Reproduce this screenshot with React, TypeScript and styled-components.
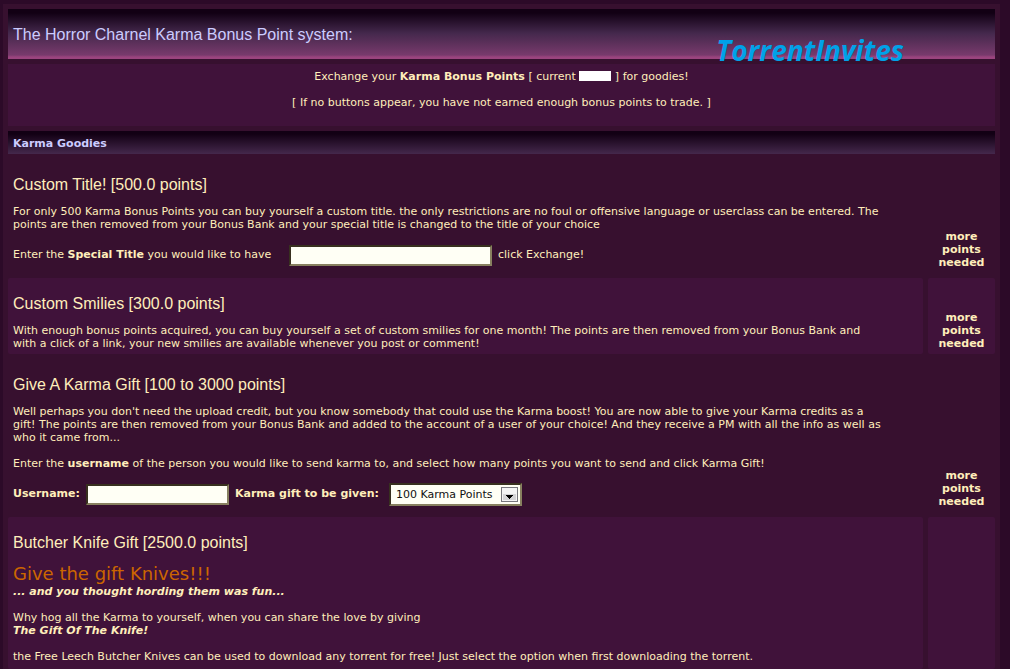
import React from "react";
import styled, { createGlobalStyle } from "styled-components";

const GlobalStyle = createGlobalStyle`
  *, *::before, *::after { box-sizing: border-box; }
  body {
    margin: 0;
    background: #2c0a28;
    color: #ffeebb;
    font: 11px/13px Verdana, "DejaVu Sans", sans-serif;
  }
  h1, h2, h3, p { margin: 0; }
`;

const Page = styled.main`
  min-height: 100vh;
  padding: 4px 10px 0 3px;
  display: flex;
  flex-direction: column;
`;

const Panel = styled.div`
  flex: 1;
  display: flex;
  flex-direction: column;
  gap: 5px;
  padding: 5px 5px 0;
  background: #37102f;
`;

const Banner = styled.header`
  position: relative;
  display: flex;
  align-items: center;
  height: 50px;
  padding: 2px 5px 0;
  background: linear-gradient(#120014 0, #120014 4px, #44284c 24px, #783a6c 46px, #9a447e 48px, #9a447e 50px);
`;

const BannerTitle = styled.h1`
  font: 16px/18px Arial, "Liberation Sans", sans-serif;
  color: #ccccff;
`;

const Watermark = styled.span`
  position: absolute;
  right: 91px;
  top: 24px;
  font: italic bold 28px/34px "Open Sans", sans-serif;
  color: #00a2e8;
`;

const Intro = styled.section`
  padding: 6px 5px 17px;
  background: #40123a;
  text-align: center;
  display: flex;
  flex-direction: column;
  gap: 13px;
`;

const Redacted = styled.span`
  display: inline-block;
  width: 32px;
  height: 10px;
  background: #fff;
  vertical-align: -1px;
`;

const SectionTitle = styled.h2`
  padding: 6px 5px 4px;
  font: inherit;
  font-weight: bold;
  color: #ccccff;
  background: linear-gradient(#120014 0, #120014 3px, #44284c 100%);
`;

const Row = styled.section<{ $fill?: boolean }>`
  display: grid;
  grid-template-columns: minmax(0, 1fr) 67px;
  gap: 5px;
  flex: ${(p) => (p.$fill ? "1" : "none")};
`;

const Cell = styled.div<{ $light?: boolean }>`
  padding: 6px 5px 4px;
  border-radius: 2px;
  background: ${(p) => (p.$light ? "#40123a" : "transparent")};
`;

const Status = styled(Cell)`
  display: flex;
  align-items: flex-end;
  justify-content: center;
  text-align: center;
  font-weight: bold;
`;

const ItemTitle = styled.h3`
  margin: 11px 0;
  font: 16px/18px Arial, "Liberation Sans", sans-serif;
  color: #ffeebb;
`;

const Text = styled.p`
  & + & { margin-top: 13px; }
`;

const Shout = styled.p`
  font-size: 18px;
  line-height: 22px;
  color: #cc6600;
`;

const FieldRow = styled.div`
  display: flex;
  align-items: center;
  height: 25px;
  margin-top: 13px;
  padding-bottom: 2px;
`;

const FieldText = styled.label<{ $bold?: boolean; $width?: number }>`
  padding-bottom: 2px;
  width: ${(p) => (p.$width ? `${p.$width}px` : "auto")};
  font-weight: ${(p) => (p.$bold ? "bold" : "normal")};
  white-space: nowrap;
`;

const TextInput = styled.input<{ $width: number }>`
  width: ${(p) => p.$width}px;
  height: 21px;
  margin-right: 6px;
  padding: 1px 4px;
  border: 2px solid;
  border-color: #38301f #87805f #87805f #38301f;
  background: #fffff5;
  font: inherit;
`;

const SelectWrap = styled.span`
  position: relative;
  display: inline-flex;
`;

const Select = styled.select`
  appearance: none;
  width: 133px;
  height: 23px;
  padding: 0 22px 0 5px;
  border: 2px solid;
  border-color: #38301f #87805f #87805f #38301f;
  border-radius: 0;
  background: #fffff5;
  color: #111;
  font: inherit;
`;

const Arrow = styled.svg`
  position: absolute;
  right: 4px;
  top: 4px;
  pointer-events: none;
`;

function MorePoints() {
  return <span>more points needed</span>;
}

export default function App() {
  return (
    <>
      <GlobalStyle />
      <Page>
        <Panel>
          <Banner>
            <BannerTitle>The Horror Charnel Karma Bonus Point system:</BannerTitle>
            <Watermark>TorrentInvites</Watermark>
          </Banner>
          <Intro>
            <p>
              Exchange your <b>Karma Bonus Points</b> [ current <Redacted /> ] for goodies!
            </p>
            <p>[ If no buttons appear, you have not earned enough bonus points to trade. ]</p>
          </Intro>
          <SectionTitle>Karma Goodies</SectionTitle>

          <Row>
            <Cell>
              <ItemTitle>Custom Title! [500.0 points]</ItemTitle>
              <Text>
                For only 500 Karma Bonus Points you can buy yourself a custom title. the only
                restrictions are no foul or offensive language or userclass can be entered. The
                <br />
                points are then removed from your Bonus Bank and your special title is changed to
                the title of your choice
              </Text>
              <FieldRow>
                <FieldText htmlFor="special-title" $width={276}>
                  Enter the <b>Special Title</b> you would like to have
                </FieldText>
                <TextInput id="special-title" type="text" $width={203} />
                <FieldText as="span">click Exchange!</FieldText>
              </FieldRow>
            </Cell>
            <Status>
              <MorePoints />
            </Status>
          </Row>

          <Row>
            <Cell $light>
              <ItemTitle>Custom Smilies [300.0 points]</ItemTitle>
              <Text>
                With enough bonus points acquired, you can buy yourself a set of custom smilies for
                one month! The points are then removed from your Bonus Bank and
                <br />
                with a click of a link, your new smilies are available whenever you post or comment!
              </Text>
            </Cell>
            <Status $light>
              <MorePoints />
            </Status>
          </Row>

          <Row>
            <Cell>
              <ItemTitle>Give A Karma Gift [100 to 3000 points]</ItemTitle>
              <Text>
                Well perhaps you don't need the upload credit, but you know somebody that could use
                the Karma boost! You are now able to give your Karma credits as a
                <br />
                gift! The points are then removed from your Bonus Bank and added to the account of a
                user of your choice! And they receive a PM with all the info as well as
                <br />
                who it came from...
              </Text>
              <Text>
                Enter the <b>username</b> of the person you would like to send karma to, and select
                how many points you want to send and click Karma Gift!
              </Text>
              <FieldRow>
                <FieldText htmlFor="username" $bold $width={73}>
                  Username:
                </FieldText>
                <TextInput id="username" type="text" $width={143} />
                <FieldText htmlFor="gift" $bold $width={154}>
                  Karma gift to be given:
                </FieldText>
                <SelectWrap>
                  <Select id="gift" defaultValue="100">
                    <option value="100">100 Karma Points</option>
                  </Select>
                  <Arrow width="17" height="15" viewBox="0 0 17 15">
                    <rect x="0.5" y="0.5" width="16" height="14" fill="#f4f4f4" stroke="#77777d" />
                    <rect x="2" y="7" width="13" height="6" fill="#d4d4d6" />
                    <path d="M5 8h7v1h-1v1h-1v1H9v1H8v-1H7v-1H6V9H5z" fill="#000" />
                  </Arrow>
                </SelectWrap>
              </FieldRow>
            </Cell>
            <Status>
              <MorePoints />
            </Status>
          </Row>

          <Row $fill>
            <Cell $light>
              <ItemTitle>Butcher Knife Gift [2500.0 points]</ItemTitle>
              <Shout>Give the gift Knives!!!</Shout>
              <Text>
                <b>
                  <i>... and you thought hording them was fun...</i>
                </b>
              </Text>
              <Text>
                Why hog all the Karma to yourself, when you can share the love by giving
                <br />
                <b>
                  <i>The Gift Of The Knife!</i>
                </b>
              </Text>
              <Text>
                the Free Leech Butcher Knives can be used to download any torrent for free! Just
                select the option when first downloading the torrent.
              </Text>
            </Cell>
            <Status $light />
          </Row>
        </Panel>
      </Page>
    </>
  );
}
